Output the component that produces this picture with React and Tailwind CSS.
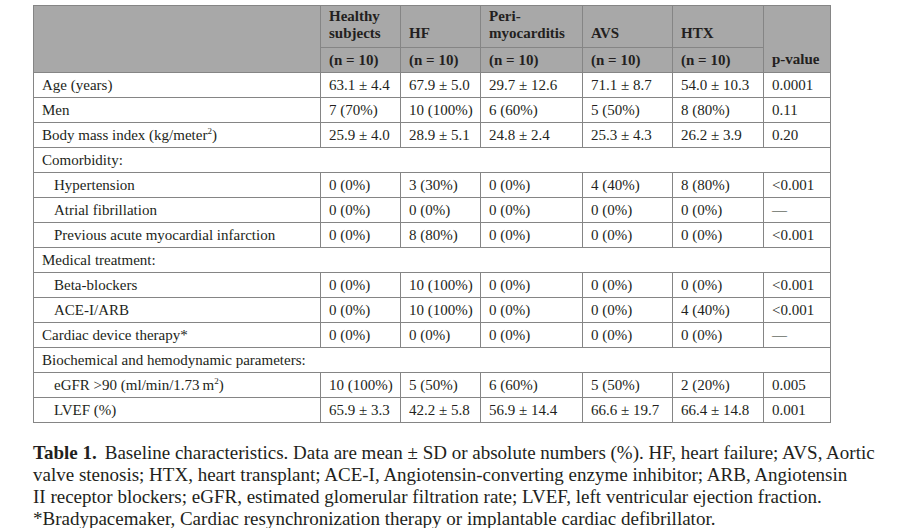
import React from 'react';

const rows = [
  { label: 'Age (years)', vals: ['63.1 ± 4.4', '67.9 ± 5.0', '29.7 ± 12.6', '71.1 ± 8.7', '54.0 ± 10.3', '0.0001'] },
  { label: 'Men', vals: ['7 (70%)', '10 (100%)', '6 (60%)', '5 (50%)', '8 (80%)', '0.11'] },
  { label: 'bmi', vals: ['25.9 ± 4.0', '28.9 ± 5.1', '24.8 ± 2.4', '25.3 ± 4.3', '26.2 ± 3.9', '0.20'] },
  { section: 'Comorbidity:' },
  { label: 'Hypertension', indent: true, vals: ['0 (0%)', '3 (30%)', '0 (0%)', '4 (40%)', '8 (80%)', '<0.001'] },
  { label: 'Atrial fibrillation', indent: true, vals: ['0 (0%)', '0 (0%)', '0 (0%)', '0 (0%)', '0 (0%)', '—'] },
  { label: 'Previous acute myocardial infarction', indent: true, vals: ['0 (0%)', '8 (80%)', '0 (0%)', '0 (0%)', '0 (0%)', '<0.001'] },
  { section: 'Medical treatment:' },
  { label: 'Beta-blockers', indent: true, vals: ['0 (0%)', '10 (100%)', '0 (0%)', '0 (0%)', '0 (0%)', '<0.001'] },
  { label: 'ACE-I/ARB', indent: true, vals: ['0 (0%)', '10 (100%)', '0 (0%)', '0 (0%)', '4 (40%)', '<0.001'] },
  { label: 'Cardiac device therapy*', vals: ['0 (0%)', '0 (0%)', '0 (0%)', '0 (0%)', '0 (0%)', '—'] },
  { section: 'Biochemical and hemodynamic parameters:' },
  { label: 'egfr', indent: true, vals: ['10 (100%)', '5 (50%)', '6 (60%)', '5 (50%)', '2 (20%)', '0.005'] },
  { label: 'LVEF (%)', indent: true, vals: ['65.9 ± 3.3', '42.2 ± 5.8', '56.9 ± 14.4', '66.6 ± 19.7', '66.4 ± 14.8', '0.001'] },
];

function Label({ label }) {
  if (label === 'bmi') return <>Body mass index (kg/meter<sup className="text-[9px] -top-[6px]">2</sup>)</>;
  if (label === 'egfr') return <>eGFR &gt;90 (ml/min/1.73{'\u2009'}m<sup className="text-[9px] -top-[6px]">2</sup>)</>;
  return label;
}

const groups = [
  ['Healthy', 'subjects'],
  ['HF'],
  ['Peri-', 'myocarditis'],
  ['AVS'],
  ['HTX'],
];

export default function App() {
  return (
    <div className="w-[920px] h-[528px] bg-white text-[#231f20] pt-[5px] pl-[33px] overflow-hidden" style={{ fontFamily: '"Liberation Serif", "DejaVu Serif", serif' }}>
      <table className="border-collapse border border-[#858585] text-[15px] leading-[17px] table-fixed w-[797px]">
        <colgroup>
          <col className="w-[287px]" />
          <col className="w-[80px]" />
          <col className="w-[80px]" />
          <col className="w-[102px]" />
          <col className="w-[90px]" />
          <col className="w-[91px]" />
          <col className="w-[67px]" />
        </colgroup>
        <thead className="bg-[#a8a8a8] font-bold">
          <tr className="h-[42px]">
            <th rowSpan={2} className="border border-[#858585]"></th>
            {groups.map((g, i) => (
              <th key={i} className="border border-[#858585] text-left align-bottom px-2 pb-[5px] font-bold">
                {g.map((line, j) => (
                  <div key={j}>{line}</div>
                ))}
              </th>
            ))}
            <th rowSpan={2} className="border border-[#858585] text-left align-bottom px-2 pb-[4px] font-bold">p-value</th>
          </tr>
          <tr className="h-[25px]">
            {groups.map((g, i) => (
              <th key={i} className="border border-[#858585] text-left px-2 font-bold">(n = 10)</th>
            ))}
          </tr>
        </thead>
        <tbody>
          {rows.map((r, i) =>
            r.section ? (
              <tr key={i} className="h-[25px]">
                <td colSpan={7} className="border border-[#858585] px-2">{r.section}</td>
              </tr>
            ) : (
              <tr key={i} className="h-[25px]">
                <td className={`border border-[#858585] ${r.indent ? 'pl-5' : 'pl-2'}`}>
                  <Label label={r.label} />
                </td>
                {r.vals.map((v, j) => (
                  <td key={j} className="border border-[#858585] px-2 whitespace-nowrap">{v}</td>
                ))}
              </tr>
            )
          )}
        </tbody>
      </table>

      <div className="mt-[19px] text-[19px] leading-[22px] whitespace-nowrap">
        <div>
          <span className="font-bold">Table 1.</span>
          <span className="ml-[8px]">Baseline characteristics. Data are mean ± SD or absolute numbers (%). HF, heart failure; AVS, Aortic</span>
        </div>
        <div>valve stenosis; HTX, heart transplant; ACE-I, Angiotensin-converting enzyme inhibitor; ARB, Angiotensin</div>
        <div>II receptor blockers; eGFR, estimated glomerular filtration rate; LVEF, left ventricular ejection fraction.</div>
        <div>*Bradypacemaker, Cardiac resynchronization therapy or implantable cardiac defibrillator.</div>
      </div>
    </div>
  );
}
